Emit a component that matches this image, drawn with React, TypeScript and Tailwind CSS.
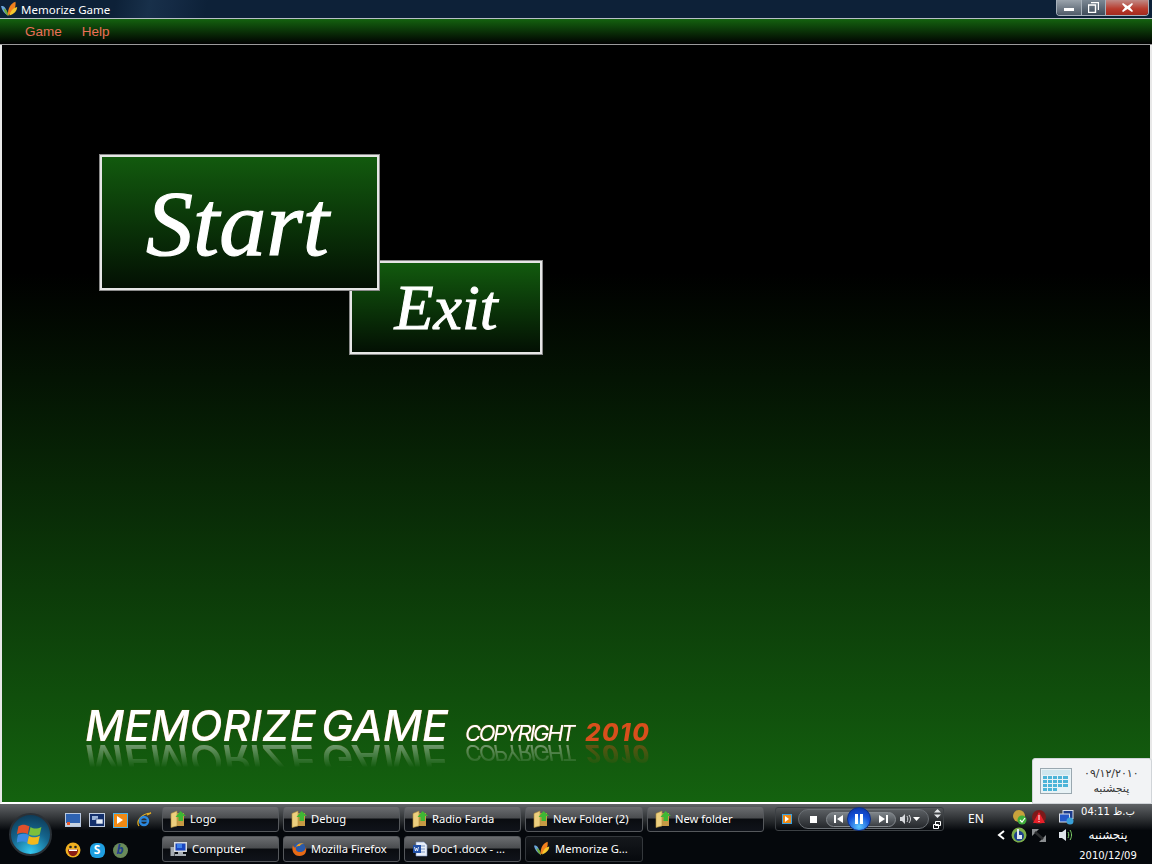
import type { ReactNode } from "react";

const uiFont = "font-['Noto_Sans','DejaVu_Sans',sans-serif]";

function Butterfly({ size = 18 }: { size?: number }) {
  return (
    <svg width={size} height={size} viewBox="0 0 20 20" className="shrink-0">
      <path d="M0 6c3-1 6 1 8 11C4 15 1 11 0 6z" fill="#6aa6dc" />
      <path d="M3 9c3 0 5 3 6 9-3-2-5-5-6-9z" fill="#6fa83a" />
      <path d="M8 17C8 9 11 3 17 1c1 6-2 13-9 16z" fill="#f2801c" />
      <path d="M10 17c1-5 4-9 9-10 0 4-3 8-9 10z" fill="#f6c92e" />
    </svg>
  );
}

function FolderIcon() {
  return (
    <svg width="16" height="18" viewBox="0 0 16 18" className="shrink-0">
      <path d="M5 3h9v13H5z" fill="#c79a44" />
      <path d="M1 3.500L7 1v15l-6 1.500z" fill="#edcf7e" />
      <path d="M1 3.500L7 1v15l-6 1.500z" fill="none" stroke="#b08f3e" strokeWidth="0.6" />
      <path d="M10.500 1L16 6h-3v5H8.500V7H5.500z" fill="#3fb734" />
    </svg>
  );
}

function ComputerIcon() {
  return (
    <svg width="18" height="16" viewBox="0 0 18 16" className="shrink-0">
      <rect x="0.500" y="6" width="4" height="9" fill="#a6acb2" />
      <rect x="4" y="1" width="13" height="10" fill="#d6dadf" />
      <rect x="5.500" y="2.500" width="10" height="7" fill="#1a46c0" />
      <rect x="7" y="3" width="5" height="4" fill="#3e80e8" />
      <path d="M8 11h5v2h3v2H5v-2h3z" fill="#aab0b6" />
    </svg>
  );
}

function FirefoxIcon() {
  return (
    <svg width="16" height="16" viewBox="0 0 16 16" className="shrink-0">
      <circle cx="8.500" cy="7.500" r="6" fill="#2c5aa8" />
      <path d="M2 4c-2 6 1 11 6.500 11S16 11 15 6c-.5 3-3 5-6 5S4 9 5 6C3.500 7 2.500 6 2 4z" fill="#e66a16" />
      <path d="M5 6c1-3 5-5 8-3-3-.5-4 1-4 2-2 0-3 0-4 1z" fill="#f2a21f" />
    </svg>
  );
}

function WordIcon() {
  return (
    <svg width="16" height="16" viewBox="0 0 16 16" className="shrink-0">
      <path d="M4 1h8l3 3v11H4z" fill="#e8eef8" stroke="#7d96c4" strokeWidth="0.6" />
      <path d="M9 5h4M9 8h4M9 11h4" stroke="#7d96c4" />
      <rect x="1" y="4" width="8" height="8" fill="#2150a8" />
      <path d="M2.500 6l1 4 1-3 1 3 1-4" fill="none" stroke="#fff" strokeWidth="0.8" />
    </svg>
  );
}

function TaskButton({ icon, label, active }: { icon: ReactNode; label: string; active?: boolean }) {
  return (
    <div
      className={
        active
          ? "flex h-[26px] items-center gap-[5px] rounded-[3px] border border-[#34383c] bg-[linear-gradient(#15181c,#06090d)] pl-[8px] text-[11.200px] text-white"
          : "flex h-[26px] items-center gap-[4px] rounded-[3px] border border-[#55585c] bg-[linear-gradient(#6b6d70,#4a4c4f_46%,#0a0c10_50%,#10131a)] pl-[7px] text-[11.200px] text-white"
      }
    >
      {icon}
      <span className="whitespace-nowrap">{label}</span>
    </div>
  );
}

function QuickIcon({ children }: { children: ReactNode }) {
  return <div className="flex h-[18px] w-[18px] items-center justify-center">{children}</div>;
}

function WordMark() {
  return (
    <div className="mb-[61px] ml-[83px] flex h-[32px] items-baseline font-['Inter',sans-serif] [-webkit-box-reflect:below_4px_linear-gradient(transparent_30%,rgba(0,0,0,.4))]">
      <span className="text-[43px] font-medium italic leading-[32px] tracking-[0px] text-white [text-shadow:0_0_1px_#c8642a] [word-spacing:-6px]">
        MEMORIZE GAME
      </span>
      <span className="ml-[17px] text-[22px] italic leading-[32px] tracking-[-2.300px] text-white [text-shadow:0_0_1px_#c8642a]">
        COPYRIGHT
      </span>
      <span className="ml-[12px] text-[24px] font-extrabold italic leading-[32px] tracking-[1.500px] text-[#d84f1c]">2010</span>
    </div>
  );
}

function MediaPlayer() {
  return (
    <div className="ml-[12px] mt-[3px] flex h-[24px] w-[169px] items-center rounded-[3px] border border-[#3c4044] pl-[6px]">
      <div className="flex h-[10px] w-[10px] items-center justify-center border border-[#3aa0e0] bg-[#f08a14]">
        <div className="h-0 w-0 border-y-[3px] border-l-[4px] border-y-transparent border-l-white" />
      </div>
      <div className="relative ml-[6px] flex h-[20px] w-[131px] items-center rounded-full border border-[#6b7075] bg-[linear-gradient(#5a5e62,#25282c)]">
        <div className="ml-[11px] h-[7px] w-[7px] bg-white" />
        <div className="ml-[9px] flex h-[15px] w-[70px] items-center justify-between rounded-full border border-[#868b90] bg-[linear-gradient(#7d8388,#3c4045)] px-[7px]">
          <svg width="10" height="8" viewBox="0 0 10 8"><path d="M0 0h2v8H0zM9 0v8L3 4z" fill="#fff" /></svg>
          <svg width="10" height="8" viewBox="0 0 10 8"><path d="M8 0h2v8H8zM1 0v8l6-4z" fill="#fff" /></svg>
        </div>
        <svg width="20" height="10" viewBox="0 0 20 10" className="ml-[4px]">
          <path d="M0 3h2l3-3v10L2 7H0z" fill="#d8dade" />
          <path d="M7 2c1 2 1 4 0 6M9 1c2 3 2 5 0 8" stroke="#d8dade" fill="none" />
          <path d="M13 3h7l-3.500 4z" fill="#fff" />
        </svg>
        {/* pause orb sits over the pill */}
        <div className="absolute left-[48px] top-[-3px] flex h-[24px] w-[24px] items-center justify-center gap-[2px] rounded-full border border-[#0b2f8a] bg-[radial-gradient(circle_at_50%_85%,#5cc8ff,#1450d8_55%,#0a2f9c)]">
          <div className="h-[10px] w-[3px] bg-white" />
          <div className="h-[10px] w-[3px] bg-white" />
        </div>
      </div>
      <div className="ml-[4px] flex flex-col items-center gap-[3px]">
        <svg width="7" height="9" viewBox="0 0 7 9"><path d="M3.500 0L7 3.500H0zM3.500 9L0 5.500h7z" fill="#e4e6e8" /></svg>
        <svg width="8" height="8" viewBox="0 0 8 8"><path d="M2.500.5h5v4h-5zM.5 3.500h5v4h-5z" fill="none" stroke="#fff" /></svg>
      </div>
    </div>
  );
}

function Tray() {
  return (
    <div className="grid h-[40px] w-[82px] shrink-0 grid-cols-[14px_22px_18px_28px] grid-rows-[18px_18px] items-center justify-items-center pt-[4px]">
      <div />
      <svg width="15" height="15" viewBox="0 0 15 15">
        <circle cx="7" cy="6" r="6" fill="#c8a23c" />
        <circle cx="10" cy="10" r="4.500" fill="#3fae3a" />
        <path d="M8 10l2 2 3-4" stroke="#fff" fill="none" strokeWidth="1.200" />
      </svg>
      <svg width="16" height="15" viewBox="0 0 16 15">
        <circle cx="8" cy="7" r="7" fill="#7c1a1a" />
        <path d="M8 2l6 11H2z" fill="#e8202a" />
        <path d="M7.500 5h1v5h-1zM7.500 11h1v1h-1z" fill="#fff" />
      </svg>
      <svg width="15" height="15" viewBox="0 0 15 15" className="ml-[8px]">
        <rect x="4" y="0.500" width="10" height="8" fill="#1c3c8c" stroke="#d8dee8" />
        <rect x="0.500" y="4" width="10" height="8" fill="#2458c8" stroke="#d8dee8" />
        <circle cx="11" cy="11" r="3.500" fill="#3aa0d8" />
      </svg>
      <svg width="9" height="10" viewBox="0 0 9 10"><path d="M7 1L2 5l5 4" fill="none" stroke="#fff" strokeWidth="2" /></svg>
      <svg width="16" height="16" viewBox="0 0 16 16">
        <circle cx="8" cy="8" r="7.500" fill="#7cae4a" />
        <circle cx="8" cy="9" r="5" fill="#1e3f8c" />
        <path d="M6 2v10h5V8H8V2z" fill="#dfe8f0" />
      </svg>
      <svg width="16" height="15" viewBox="0 0 16 15">
        <path d="M1 1h7L1 8zM15 14H8l7-7z" fill="#8a8d90" />
        <path d="M4 4l8 7" stroke="#2a2c2e" strokeWidth="2.500" />
      </svg>
      <svg width="14" height="12" viewBox="0 0 14 12" className="ml-[8px]">
        <path d="M0 3h3l4-3v12L3 9H0z" fill="#dfe4ea" />
        <path d="M9 3c1 2 1 4 0 6M11 1c2 3 2 7 0 10" stroke="#7fd06a" fill="none" />
      </svg>
    </div>
  );
}

function Clock() {
  return (
    <div className="flex w-[64px] shrink-0 flex-col items-center font-['DejaVu_Sans',sans-serif] text-[10px] text-white">
      <div className="h-[16px] whitespace-nowrap leading-[16px]">ب.ظ 04:11</div>
      <div className="h-[30px] text-[12px] leading-[30px]">پنجشنبه</div>
      <div className="h-[12px] whitespace-nowrap leading-[12px]">2010/12/09</div>
    </div>
  );
}

export default function App() {
  return (
    <div className={`flex h-[864px] w-[1152px] flex-col overflow-hidden bg-black ${uiFont}`}>
      {/* title bar */}
      <div className="flex h-[18px] shrink-0 items-center bg-[linear-gradient(100deg,#0d2138_10%,#18304a_13%,#142a44_15%,#0d2138_18%)]">
        <div className="ml-[1px]">
          <Butterfly size={17} />
        </div>
        <span className="ml-[3px] pt-[1px] text-[11.500px] text-white">Memorize Game</span>
        <div className="ml-auto mr-[3px] flex h-[16px] w-[93px] self-start overflow-hidden rounded-b-[4px] border border-t-0 border-[#a6b0ba]">
          <div className="flex w-[25px] items-center justify-center border-r border-[#a6b0ba] bg-[linear-gradient(#9aa3ac,#4f5b68)]">
            <div className="mt-[3px] h-[3px] w-[10px] bg-white" />
          </div>
          <div className="flex w-[24px] items-center justify-center border-r border-[#a6b0ba] bg-[linear-gradient(#7c8894,#3f4c5a)]">
            <svg width="11" height="11" viewBox="0 0 11 11">
              <path d="M3 .5h7.500V8M.5 3h7v7.500h-7z" fill="none" stroke="#fff" strokeWidth="1.400" />
            </svg>
          </div>
          <div className="flex flex-1 items-center justify-center bg-[linear-gradient(#c08a86,#b83a2c_60%,#a42a1e)]">
            <svg width="11" height="9" viewBox="0 0 11 9">
              <path d="M1 0l4.500 3L10 0l1 1-3 3.500L11 8l-1 1-4.500-3L1 9 0 8l3-3.500L0 1z" fill="#fff" />
            </svg>
          </div>
        </div>
      </div>
      <div className="h-px shrink-0 bg-[#b8c0c6]" />
      {/* menu */}
      <div className="flex h-[25px] shrink-0 items-center gap-[20px] bg-[linear-gradient(#14620f,#000)] pl-[25px] pt-[2px] font-['Liberation_Sans',sans-serif] text-[13.500px] text-[#ea6f58]">
        <span>Game</span>
        <span>Help</span>
      </div>
      <div className="h-px shrink-0 bg-[#9a9a9a]" />

      {/* game area */}
      <div className="relative flex min-h-0 flex-1 flex-col border-x-2 border-b-2 border-x-[#e8e8e8] border-b-white bg-[linear-gradient(#000_0%,#000_30%,#14620f_100%)]">
        <div className="relative z-10 ml-[98px] mt-[110px] flex h-[135px] w-[279px] items-center justify-center border-2 border-[#e6e6e6] bg-[linear-gradient(#125a0e,#031003)] font-['Liberation_Serif',serif] text-[94px] italic leading-none text-white outline-1 outline-[#8a8a8a] [-webkit-text-stroke:1.200px_white]">
          <span className="mr-[4px]">Start</span>
        </div>
        <div className="ml-[348px] mt-[-29px] flex h-[93px] w-[192px] items-center justify-center border-2 border-[#e6e6e6] bg-[linear-gradient(#125a0e,#031003)] font-['Liberation_Serif',serif] text-[64px] italic leading-none text-white outline-1 outline-[#8a8a8a] [-webkit-text-stroke:1px_white]">
          Exit
        </div>
        <div className="mt-auto">
          <WordMark />
        </div>
        {/* date popup over the corner */}
        <div className="absolute bottom-[-2px] right-[-2px] flex h-[46px] w-[120px] items-center rounded-t-[3px] border border-[#d0d4d8] bg-[#f2f3f5]">
          <svg width="32" height="26" viewBox="0 0 32 26" className="ml-[7px] shrink-0">
            <rect x="0.500" y="0.500" width="31" height="25" fill="#e8f2f6" stroke="#9aa8b0" />
            <rect x="2" y="2" width="28" height="5" fill="#cfe6ee" />
            <path
              d="M3 8h4v3H3zM8 8h4v3H8zM13 8h4v3h-4zM18 8h4v3h-4zM23 8h5v3h-5zM3 12h4v3H3zM8 12h4v3H8zM13 12h4v3h-4zM18 12h4v3h-4zM23 12h5v3h-5zM3 16h4v3H3zM8 16h4v3H8zM13 16h4v3h-4zM18 16h4v3h-4zM23 16h5v3h-5zM3 20h4v3H3zM8 20h4v3H8zM13 20h4v3h-4z"
              fill="#4cb4d8"
            />
          </svg>
          <div className="ml-[12px] flex flex-col items-center font-['DejaVu_Sans',sans-serif] text-[11px] leading-[15px] text-[#333]">
            <span>۰۹/۱۲/۲۰۱۰</span>
            <span>پنجشنبه</span>
          </div>
        </div>
      </div>

      {/* taskbar */}
      <div className="flex h-[60px] shrink-0 bg-[linear-gradient(#606366,#34373a_22%,#05080c_44%,#05080c)]">
        <div className="flex w-[62px] shrink-0 items-center pl-[9px]">
          <div className="flex h-[43px] w-[43px] items-center justify-center rounded-full border-2 border-[#2a3036] bg-[radial-gradient(circle_at_50%_95%,#35c8f0,#14648c_50%,#0c2f48)]">
            <svg width="27" height="24" viewBox="0 0 24 22">
              <path d="M1 4c3-2 6-2 10 0l-1.500 7c-3-1.500-6-1.500-10 0z" fill="#e0502c" />
              <path d="M12 4.500c3 2 6 2 10 0l-1.500 7c-3 1.500-6 1.500-10 0z" fill="#7cc03c" />
              <path d="M-.5 12c4-1.500 7-1.500 10 0L8 19c-3-1.500-6-1.500-10 0z" fill="#3a8ae0" transform="translate(1 0)" />
              <path d="M10.500 12.500c3 2 6 2 10 0L19 20c-4 1.500-7 1-10-.5z" fill="#f4b81c" />
            </svg>
          </div>
        </div>
        <div className="grid w-[96px] shrink-0 grid-cols-[24px_23px_24px_23px] grid-rows-[30px_30px] items-center pl-[2px] pt-[1px]">
          <QuickIcon>
            <svg width="16" height="14" viewBox="0 0 16 14">
              <rect x="0.500" y="0.500" width="15" height="13" fill="#2e62b0" stroke="#b8c8e0" />
              <rect x="1" y="10" width="14" height="3" fill="#c6d2e0" />
              <rect x="2" y="9" width="3" height="3" fill="#e85a2c" />
            </svg>
          </QuickIcon>
          <QuickIcon>
            <svg width="16" height="14" viewBox="0 0 16 14">
              <rect x="0.500" y="0.500" width="15" height="13" fill="#14306c" stroke="#c0cce0" />
              <rect x="3" y="3" width="6" height="4" fill="#9cb4d8" />
              <rect x="7" y="6" width="7" height="5" fill="#e4ecf6" stroke="#14306c" strokeWidth="0.600" />
            </svg>
          </QuickIcon>
          <QuickIcon>
            <div className="flex h-[15px] w-[15px] items-center justify-center border border-[#4ab0e8] bg-[#f08a14]">
              <div className="h-0 w-0 border-y-[4px] border-l-[6px] border-y-transparent border-l-white" />
            </div>
          </QuickIcon>
          <QuickIcon>
            <svg width="16" height="16" viewBox="0 0 16 16">
              <path d="M3 14C0 10 4 2 15 1c-2 1-3 2-4 2" fill="none" stroke="#e8b020" strokeWidth="1.200" />
              <circle cx="8" cy="9" r="4" fill="none" stroke="#2a88e0" strokeWidth="2.400" />
              <path d="M4 9h8" stroke="#2a88e0" strokeWidth="1.400" />
            </svg>
          </QuickIcon>
          <QuickIcon>
            <svg width="16" height="16" viewBox="0 0 16 16">
              <circle cx="8" cy="8" r="7.500" fill="#f0b020" />
              <circle cx="5.500" cy="5" r="1.300" fill="#222" />
              <circle cx="10.500" cy="5" r="1.300" fill="#222" />
              <path d="M3 7.500h10c0 4-2 6.500-5 6.500s-5-2.500-5-6.500z" fill="#8a1c14" />
              <path d="M4 7.500h8V9H4z" fill="#fff" />
            </svg>
          </QuickIcon>
          <QuickIcon>
            <div className="flex h-[15px] w-[15px] items-center justify-center rounded-[6px] bg-[#1e9ee0] text-[12px] font-bold leading-none text-white">S</div>
          </QuickIcon>
          <QuickIcon>
            <div className="flex h-[15px] w-[15px] items-center justify-center rounded-full bg-[#6a8a5a] text-[12px] font-bold italic leading-none text-[#1e3f8c]">b</div>
          </QuickIcon>
        </div>
        <div className="grid w-[605px] shrink-0 grid-cols-[117px_117px_117px_118px_117px] grid-rows-[26px_26px] gap-x-[4px] gap-y-[4px] pl-[4px] pt-[2px]">
          <TaskButton icon={<FolderIcon />} label="Logo" />
          <TaskButton icon={<FolderIcon />} label="Debug" />
          <TaskButton icon={<FolderIcon />} label="Radio Farda" />
          <TaskButton icon={<FolderIcon />} label="New Folder (2)" />
          <TaskButton icon={<FolderIcon />} label="New folder" />
          <TaskButton icon={<ComputerIcon />} label="Computer" />
          <TaskButton icon={<FirefoxIcon />} label="Mozilla Firefox" />
          <TaskButton icon={<WordIcon />} label="Doc1.docx - ..." />
          <TaskButton active icon={<Butterfly size={16} />} label="Memorize G..." />
        </div>
        <MediaPlayer />
        <div className="w-[50px] shrink-0 pl-[12px] pt-[6px] text-left text-[12px] text-white">
          <span className="ml-[12px]">EN</span>
        </div>
        <Tray />
        <Clock />
      </div>
    </div>
  );
}
